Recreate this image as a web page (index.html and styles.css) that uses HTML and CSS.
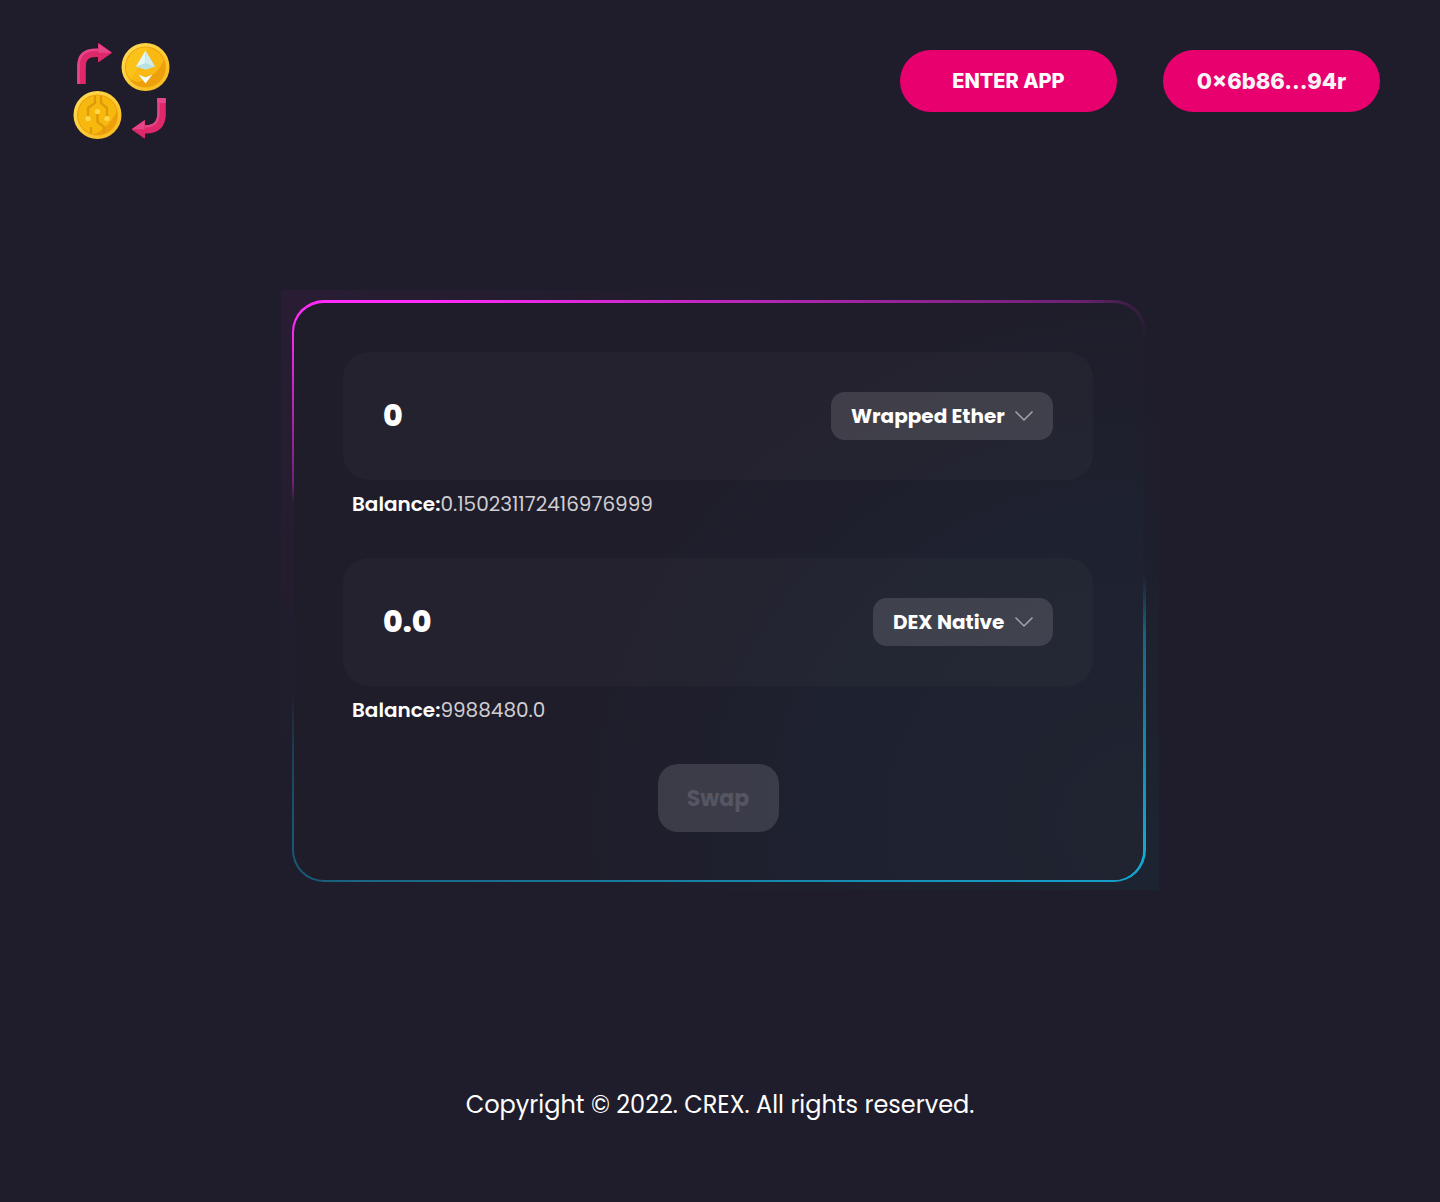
FILE: index.html
```html
<!DOCTYPE html>
<html lang="en">
<head>
<meta charset="utf-8">
<meta name="viewport" content="width=device-width, initial-scale=1">
<title>CREX</title>
<link rel="stylesheet" href="styles.css">
</head>
<body>
<header class="header">
  <a class="logo" href="#" aria-label="CREX home">
    <svg width="96" height="96" viewBox="0 0 96 96" aria-hidden="true">
      <defs>
        <linearGradient id="rim" x1="0" y1="0" x2="1" y2="1"><stop offset="0" stop-color="#ffdc55"/><stop offset=".55" stop-color="#fccb36"/><stop offset="1" stop-color="#f5b51c"/></linearGradient>
        <clipPath id="ethFace"><circle cx="71.5" cy="24" r="19.5"/></clipPath>
        <clipPath id="chipFace"><circle cx="23.5" cy="72" r="19.5"/></clipPath>
      </defs>
      <path d="M7.500 41V24Q7.500 9.700 22 9.700H26" fill="none" stroke="#de2869" stroke-width="8.600"/>
      <path d="M4.500 41V23Q4.500 7 21 7H24" fill="none" stroke="#e5468a" stroke-width="2.600"/>
      <path d="M24.500 .5 37.500 9.700 24.500 18.800Z" fill="#de2869" stroke="#de2869" stroke-linejoin="round"/>
      <path d="M24.500 .5 37.500 9.700H24.500Z" fill="#e5468a"/>
      <path d="M87.500 55V71Q87.500 86.300 72 86.300H69" fill="none" stroke="#de2869" stroke-width="8.600"/>
      <path d="M84.500 57V70Q84.500 83.500 71 83.500" fill="none" stroke="#e5468a" stroke-width="2.200"/>
      <path d="M83.200 55H91.800V60H83.200Z" fill="#e5468a"/>
      <path d="M70.500 77.500 58 86.300 70.500 95Z" fill="#de2869" stroke="#de2869" stroke-linejoin="round"/>
      <path d="M70.500 77.500 58 86.300H70.500Z" fill="#e5468a"/>
      <circle cx="71.500" cy="24" r="24" fill="url(#rim)"/>
      <circle cx="71.500" cy="24" r="20.500" fill="#eda00b"/>
      <g clip-path="url(#ethFace)">
        <path d="M50 2H93Q91 32 63 39L50 34Z" fill="#f9b814"/>
        <path d="M50 2H76Q68 16 57 37L50 34Z" fill="#fbc21a"/>
      </g>
      <path d="M71.500 7.500 62 23.500 71.500 26.500Z" fill="#e4f7f7"/>
      <path d="M71.500 7.500 81 23.500 71.500 26.500Z" fill="#d0eef0"/>
      <path d="M62 23.500 71.500 20 81 23.500 71.500 26.500Z" fill="#b9e0e3"/>
      <path d="M64.500 31.500 71.500 34.500 78.500 31.500 71.500 40.500Z" fill="#f0fdfc"/>
      <circle cx="23.500" cy="72" r="24" fill="url(#rim)"/>
      <circle cx="23.500" cy="72" r="20.500" fill="#eda00b"/>
      <g clip-path="url(#chipFace)">
        <path d="M3 52H45Q46 78 19 92H3Z" fill="#f8b90f"/>
        <g fill="none" stroke="#df9a0a" stroke-width="2.400">
          <path d="M21 52V60L14 65V74M27 52V60L33 65V74M23.500 68V79L30 84V92M17 92V84"/>
        </g>
      </g>
      <circle cx="23.500" cy="68.500" r="2.600" fill="#ffd84b"/>
      <circle cx="14" cy="75.500" r="2.600" fill="#ffd84b"/>
      <circle cx="33" cy="75.500" r="2.600" fill="#ffd84b"/>
    </svg>
  </a>
  <nav class="actions">
    <button class="pill pill-enter" type="button">ENTER APP</button>
    <button class="pill pill-wallet" type="button">0×6b86...94r</button>
  </nav>
</header>

<main class="main">
  <div class="glow">
    <form class="card">
      <div class="field">
        <input class="amount" type="text" inputmode="decimal" value="0" aria-label="Amount to swap">
        <div class="token">
          <select class="token-select" aria-label="Token to swap"><option>Wrapped Ether</option></select>
          <svg class="chevron" width="20" height="12" viewBox="0 0 20 12" aria-hidden="true"><path d="M1.500 1.500 10 10 18.500 1.500"/></svg>
        </div>
      </div>
      <p class="balance"><strong>Balance:</strong><span>0.150231172416976999</span></p>
      <div class="field">
        <input class="amount" type="text" inputmode="decimal" value="0.0" aria-label="Amount received">
        <div class="token">
          <select class="token-select" aria-label="Token received"><option>DEX Native</option></select>
          <svg class="chevron" width="20" height="12" viewBox="0 0 20 12" aria-hidden="true"><path d="M1.500 1.500 10 10 18.500 1.500"/></svg>
        </div>
      </div>
      <p class="balance"><strong>Balance:</strong><span>9988480.0</span></p>
      <button class="swap" type="submit" disabled>Swap</button>
    </form>
  </div>
</main>

<footer class="footer">Copyright © 2022. CREX. All rights reserved.</footer>
</body>
</html>
```
FILE: styles.css
```css
*, *::before, *::after { box-sizing: border-box; }

body {
  margin: 0;
  min-height: 100vh;
  display: flex;
  flex-direction: column;
  background: #1f1d2b;
  color: #fff;
  font-family: Poppins, Inter, sans-serif;
}

button, input, select { font-family: inherit; color: inherit; border: 0; }

.header {
  display: flex;
  justify-content: space-between;
  align-items: flex-start;
  padding: 43px 60px 0 74px;
}
.logo { display: block; }
.logo svg { display: block; overflow: visible; }

.actions { display: flex; gap: 46px; padding-top: 7px; }
.pill {
  width: 217px;
  height: 62px;
  padding: 0;
  border-radius: 31px;
  background: #e8006f;
  font-family: Inter, sans-serif;
  font-weight: 800;
}
.pill-enter { font-size: 20px; }
.pill-wallet { font-size: 22px; color: #f8f4f6; }

.main {
  flex: 1;
  display: flex;
  justify-content: center;
  padding: 151px 24px 0;
}
.glow {
  width: 100%;
  max-width: 878px;
  align-self: flex-start;
  padding: 10px 13px 8px 11px;
  background:
    radial-gradient(ellipse 60% 80% at 0 0, #291d33, rgba(41, 29, 51, 0)),
    radial-gradient(ellipse 60% 85% at 100% 100%, #1d2431, rgba(29, 36, 49, 0));
}
.card {
  display: flex;
  flex-direction: column;
  padding: 49px 50px 48px 49px;
  border: 2px solid transparent;
  border-top-width: 3px;
  border-right-width: 3px;
  border-radius: 32px;
  background:
    radial-gradient(ellipse 68% 92% at 100% 90%, #202431 0%, #1e212f 60%, rgba(31, 29, 43, 0) 100%) padding-box,
    linear-gradient(#1f1d2a, #1f1d2a) padding-box,
    radial-gradient(ellipse 98% 35% at 4% 0, #ff2bfa 0%, #ff2bfa 12%, rgba(255, 43, 250, .35) 90%, rgba(255, 43, 250, 0) 100%) border-box,
    radial-gradient(ellipse 122% 48% at 100% 95%, #14a9d6 0%, rgba(20, 169, 214, .5) 78%, rgba(20, 169, 214, 0) 100%) border-box;
}
.field {
  display: flex;
  align-items: center;
  justify-content: space-between;
  gap: 20px;
  height: 128px;
  padding: 0 40px;
  border-radius: 26px;
  background: rgba(255, 255, 255, .024);
}
.amount {
  flex: 1;
  min-width: 0;
  padding: 0;
  background: none;
  font-size: 30px;
  font-weight: 800;
  outline: 0;
}
.token { display: grid; align-items: center; }
.token-select {
  grid-area: 1 / 1;
  height: 48px;
  padding: 0 48px 0 20px;
  appearance: none;
  border-radius: 14px;
  background: rgba(255, 255, 255, .13);
  font-size: 20px;
  font-weight: 700;
}
.chevron {
  grid-area: 1 / 1;
  justify-self: end;
  margin-right: 19px;
  pointer-events: none;
  fill: none;
  stroke: #a5a4aa;
  stroke-width: 1.5;
}
.balance {
  display: flex;
  align-items: center;
  height: 48px;
  margin: 0 9px 30px;
  font-size: 20px;
}
.balance strong { font-weight: 600; }
.balance span { color: #cfced3; }
.swap {
  align-self: center;
  width: 121px;
  height: 68px;
  border-radius: 20px;
  background: rgba(255, 255, 255, .13);
  color: #565562;
  font-size: 22px;
  font-weight: 700;
}
.footer {
  padding: 0 24px 81px;
  text-align: center;
  font-size: 24px;
  line-height: 32px;
}
```
